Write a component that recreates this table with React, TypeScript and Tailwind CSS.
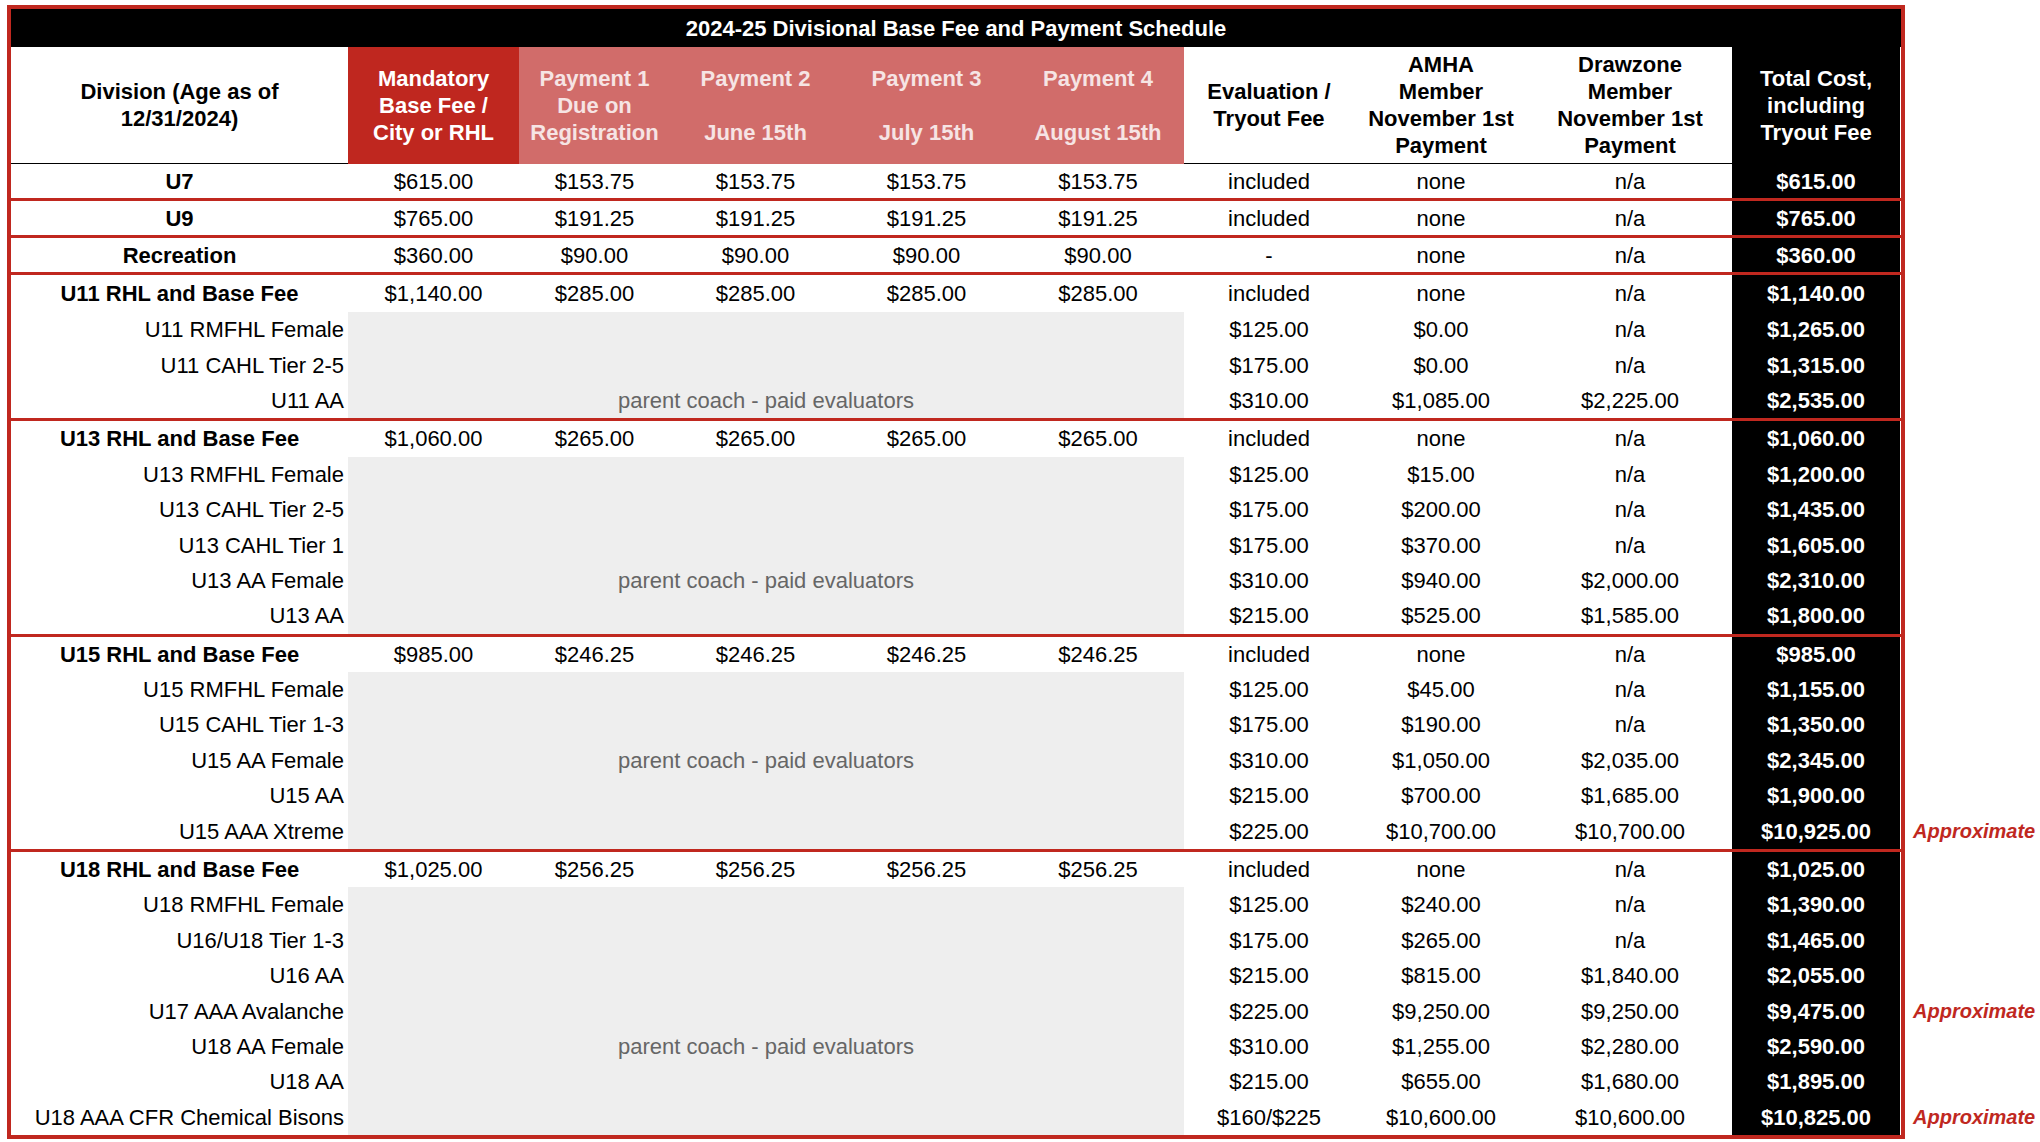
// 2024-25 divisional fee sheet — one bordered table, grouped by age division.
// Sub-divisions sit under each RHL/base-fee row with the payment columns
// greyed out (parent coach - paid evaluators).

type MainRow = {
  name: string
  base: string
  pay: string
  evalFee: string
  amha: string
  drawzone: string
  total: string
}

type SubRow = {
  name: string
  evalFee: string
  amha: string
  drawzone: string
  total: string
  approx?: boolean
}

type Group = { main: MainRow; subs: SubRow[]; noteAt?: number }

const groups: Group[] = [
  {
    main: { name: 'U7', base: '$615.00', pay: '$153.75', evalFee: 'included', amha: 'none', drawzone: 'n/a', total: '$615.00' },
    subs: [],
  },
  {
    main: { name: 'U9', base: '$765.00', pay: '$191.25', evalFee: 'included', amha: 'none', drawzone: 'n/a', total: '$765.00' },
    subs: [],
  },
  {
    main: { name: 'Recreation', base: '$360.00', pay: '$90.00', evalFee: '-', amha: 'none', drawzone: 'n/a', total: '$360.00' },
    subs: [],
  },
  {
    main: { name: 'U11 RHL and Base Fee', base: '$1,140.00', pay: '$285.00', evalFee: 'included', amha: 'none', drawzone: 'n/a', total: '$1,140.00' },
    subs: [
      { name: 'U11 RMFHL Female', evalFee: '$125.00', amha: '$0.00', drawzone: 'n/a', total: '$1,265.00' },
      { name: 'U11 CAHL Tier 2-5', evalFee: '$175.00', amha: '$0.00', drawzone: 'n/a', total: '$1,315.00' },
      { name: 'U11 AA', evalFee: '$310.00', amha: '$1,085.00', drawzone: '$2,225.00', total: '$2,535.00' },
    ],
    noteAt: 2,
  },
  {
    main: { name: 'U13 RHL and Base Fee', base: '$1,060.00', pay: '$265.00', evalFee: 'included', amha: 'none', drawzone: 'n/a', total: '$1,060.00' },
    subs: [
      { name: 'U13 RMFHL Female', evalFee: '$125.00', amha: '$15.00', drawzone: 'n/a', total: '$1,200.00' },
      { name: 'U13 CAHL Tier 2-5', evalFee: '$175.00', amha: '$200.00', drawzone: 'n/a', total: '$1,435.00' },
      { name: 'U13 CAHL Tier 1', evalFee: '$175.00', amha: '$370.00', drawzone: 'n/a', total: '$1,605.00' },
      { name: 'U13 AA Female', evalFee: '$310.00', amha: '$940.00', drawzone: '$2,000.00', total: '$2,310.00' },
      { name: 'U13 AA', evalFee: '$215.00', amha: '$525.00', drawzone: '$1,585.00', total: '$1,800.00' },
    ],
    noteAt: 3,
  },
  {
    main: { name: 'U15 RHL and Base Fee', base: '$985.00', pay: '$246.25', evalFee: 'included', amha: 'none', drawzone: 'n/a', total: '$985.00' },
    subs: [
      { name: 'U15 RMFHL Female', evalFee: '$125.00', amha: '$45.00', drawzone: 'n/a', total: '$1,155.00' },
      { name: 'U15 CAHL Tier 1-3', evalFee: '$175.00', amha: '$190.00', drawzone: 'n/a', total: '$1,350.00' },
      { name: 'U15 AA Female', evalFee: '$310.00', amha: '$1,050.00', drawzone: '$2,035.00', total: '$2,345.00' },
      { name: 'U15 AA', evalFee: '$215.00', amha: '$700.00', drawzone: '$1,685.00', total: '$1,900.00' },
      { name: 'U15 AAA Xtreme', evalFee: '$225.00', amha: '$10,700.00', drawzone: '$10,700.00', total: '$10,925.00', approx: true },
    ],
    noteAt: 2,
  },
  {
    main: { name: 'U18 RHL and Base Fee', base: '$1,025.00', pay: '$256.25', evalFee: 'included', amha: 'none', drawzone: 'n/a', total: '$1,025.00' },
    subs: [
      { name: 'U18 RMFHL Female', evalFee: '$125.00', amha: '$240.00', drawzone: 'n/a', total: '$1,390.00' },
      { name: 'U16/U18 Tier 1-3', evalFee: '$175.00', amha: '$265.00', drawzone: 'n/a', total: '$1,465.00' },
      { name: 'U16 AA', evalFee: '$215.00', amha: '$815.00', drawzone: '$1,840.00', total: '$2,055.00' },
      { name: 'U17 AAA Avalanche', evalFee: '$225.00', amha: '$9,250.00', drawzone: '$9,250.00', total: '$9,475.00', approx: true },
      { name: 'U18 AA Female', evalFee: '$310.00', amha: '$1,255.00', drawzone: '$2,280.00', total: '$2,590.00' },
      { name: 'U18 AA', evalFee: '$215.00', amha: '$655.00', drawzone: '$1,680.00', total: '$1,895.00' },
      { name: 'U18 AAA CFR Chemical Bisons', evalFee: '$160/$225', amha: '$10,600.00', drawzone: '$10,600.00', total: '$10,825.00', approx: true },
    ],
    noteAt: 4,
  },
]

const cols = 'grid grid-cols-[337px_171px_151px_171px_171px_172px_170px_174px_204px_168px]'
const cell = 'flex h-full items-center justify-center'

function Approx() {
  return (
    <span className="absolute top-0 left-[calc(100%+12px)] flex h-full items-center text-[20px] font-bold italic text-[#c0281f] whitespace-nowrap">
      Approximate
    </span>
  )
}

function HeaderRow() {
  return (
    <div className={`${cols} h-[117px] text-[22px] leading-[27px] font-bold text-center`}>
      <div className={`${cell} border-b border-black px-4`}>Division (Age as of 12/31/2024)</div>
      <div className={`${cell} bg-[#bf271f] text-white`}>
        Mandatory
        <br />
        Base Fee /
        <br />
        City or RHL
      </div>
      <div className={`${cell} bg-[#d16c6a] text-[#f6e4e4]`}>
        Payment 1
        <br />
        Due on
        <br />
        Registration
      </div>
      {[
        ['Payment 2', 'June 15th'],
        ['Payment 3', 'July 15th'],
        ['Payment 4', 'August 15th'],
      ].map(([a, b]) => (
        <div key={a} className={`${cell} flex-col bg-[#d16c6a] text-[#f6e4e4]`}>
          <span>{a}</span>
          <span className="h-[27px]" />
          <span>{b}</span>
        </div>
      ))}
      <div className={`${cell} border-b border-black`}>
        Evaluation /
        <br />
        Tryout Fee
      </div>
      <div className={`${cell} border-b border-black`}>
        AMHA
        <br />
        Member
        <br />
        November 1st
        <br />
        Payment
      </div>
      <div className={`${cell} border-b border-black`}>
        Drawzone
        <br />
        Member
        <br />
        November 1st
        <br />
        Payment
      </div>
      <div className={`${cell} bg-black text-white`}>
        Total Cost,
        <br />
        including
        <br />
        Tryout Fee
      </div>
    </div>
  )
}

// single-row divisions are a touch shorter; the first grouped row a touch taller
const mainHeight = (gi: number, hasSubs: boolean) =>
  !hasSubs ? 'h-[34px]' : gi === 3 ? 'h-[37px]' : 'h-[35.4px]'

function Main({ row, height }: { row: MainRow; height: string }) {
  return (
    <div className={`${cols} ${height} text-[22px]`}>
      <div className={`${cell} font-bold`}>{row.name}</div>
      <div className={cell}>{row.base}</div>
      <div className={cell}>{row.pay}</div>
      <div className={cell}>{row.pay}</div>
      <div className={cell}>{row.pay}</div>
      <div className={cell}>{row.pay}</div>
      <div className={cell}>{row.evalFee}</div>
      <div className={cell}>{row.amha}</div>
      <div className={cell}>{row.drawzone}</div>
      <div className={`${cell} bg-black font-bold text-white`}>{row.total}</div>
    </div>
  )
}

function Sub({ row, note }: { row: SubRow; note: boolean }) {
  return (
    <div className={`${cols} relative h-[35.4px] text-[22px]`}>
      <div className="flex h-full items-center justify-end pr-[4px]">{row.name}</div>
      <div className={`${cell} col-span-5 bg-[#eeeeee] text-[#666666]`}>
        {note ? 'parent coach - paid evaluators' : ''}
      </div>
      <div className={cell}>{row.evalFee}</div>
      <div className={cell}>{row.amha}</div>
      <div className={cell}>{row.drawzone}</div>
      <div className={`${cell} bg-black font-bold text-white`}>{row.total}</div>
      {row.approx && <Approx />}
    </div>
  )
}

export default function App() {
  return (
    <div className="min-h-screen bg-white pt-[5px] pl-[7px] font-['Liberation_Sans',Arial,sans-serif] text-black">
      <div className="w-[1898px] border-4 border-[#c0281f]">
        <div className="flex h-[38px] items-center justify-center bg-black text-[22px] font-bold text-white">
          2024-25 Divisional Base Fee and Payment Schedule
        </div>
        <HeaderRow />
        {groups.map((g, gi) => (
          <div key={g.main.name} className={gi > 0 ? 'border-t-[3px] border-[#c0281f]' : ''}>
            <Main row={g.main} height={mainHeight(gi, g.subs.length > 0)} />
            {g.subs.map((s, si) => (
              <Sub key={s.name} row={s} note={si === g.noteAt} />
            ))}
          </div>
        ))}
      </div>
    </div>
  )
}
